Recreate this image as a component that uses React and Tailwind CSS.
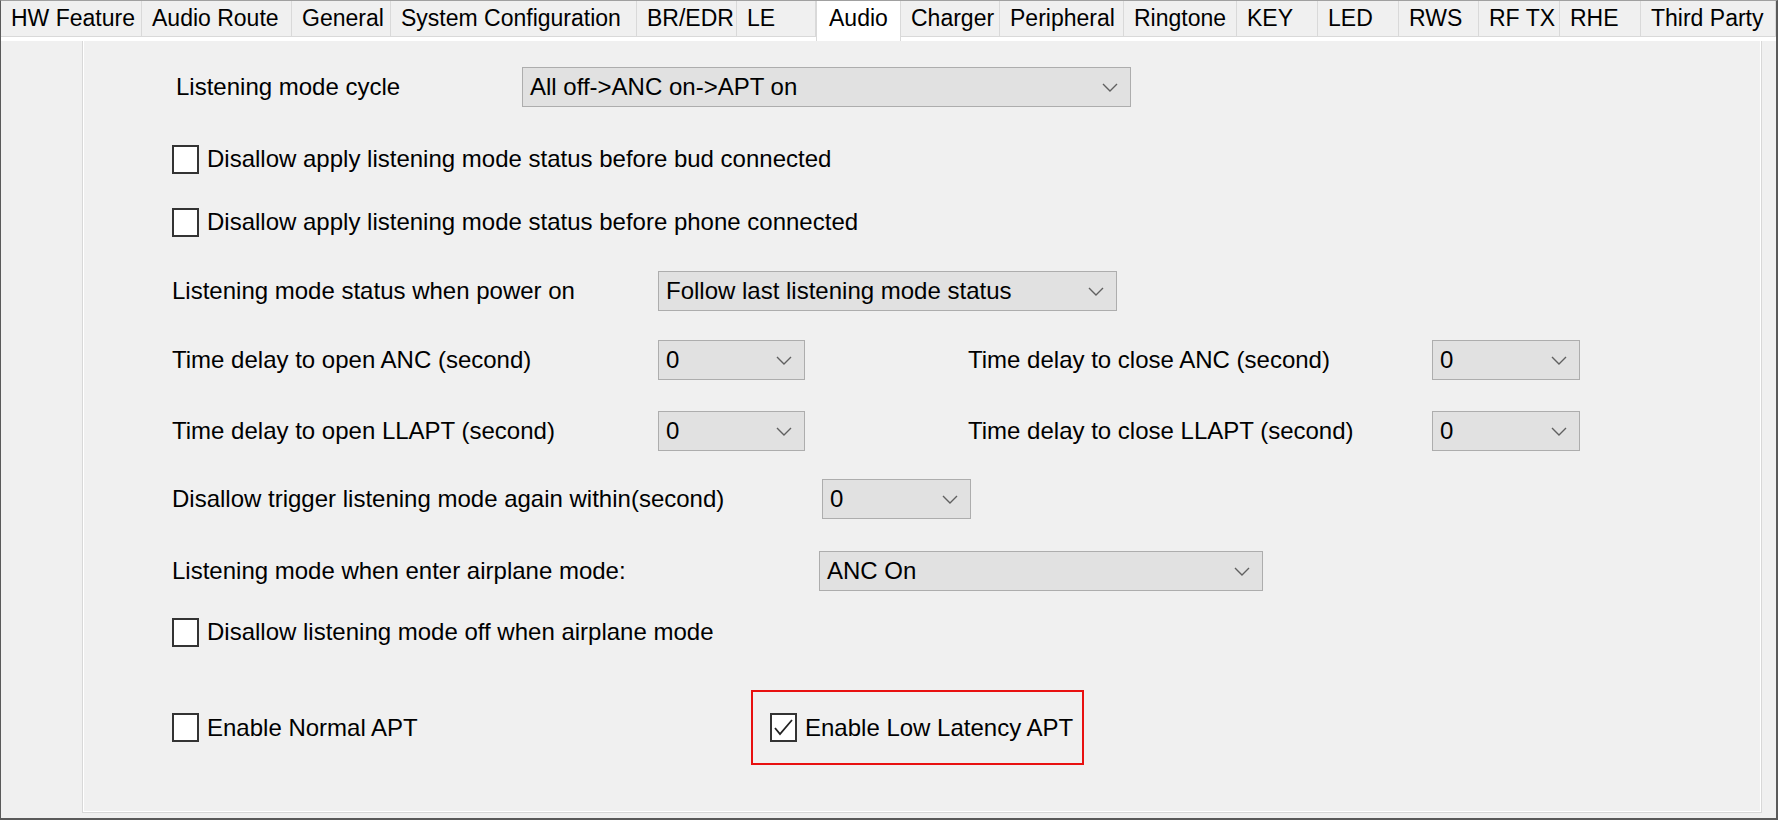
import React from "react";

const tabs = [
  { label: "HW Feature", w: "w-[141px]" },
  { label: "Audio Route", w: "w-[150px]" },
  { label: "General", w: "w-[99px]" },
  { label: "System Configuration", w: "w-[246px]" },
  { label: "BR/EDR", w: "w-[100px]" },
  { label: "LE", w: "w-[79px]" },
  { label: "Audio", w: "w-[85px]", active: true },
  { label: "Charger", w: "w-[99px]" },
  { label: "Peripheral", w: "w-[124px]" },
  { label: "Ringtone", w: "w-[113px]" },
  { label: "KEY", w: "w-[81px]" },
  { label: "LED", w: "w-[81px]" },
  { label: "RWS", w: "w-[80px]" },
  { label: "RF TX", w: "w-[81px]" },
  { label: "RHE", w: "w-[81px]" },
  { label: "Third Party", w: "w-[135px]" },
];

function Chevron() {
  return (
    <svg width="16" height="9" viewBox="0 0 16 9" className="shrink-0">
      <polyline points="1,1 8,8 15,1" fill="none" stroke="#606060" strokeWidth="1.4" />
    </svg>
  );
}

function Select({ value, w }) {
  return (
    <div
      className={`${w} h-[40px] shrink-0 flex items-center justify-between bg-[#e1e1e1] border border-[#adadad] pl-[7px] pr-[12px]`}
    >
      <span className="leading-none whitespace-nowrap">{value}</span>
      <Chevron />
    </div>
  );
}

function Checkbox({ checked }) {
  return (
    <div className="w-[27px] h-[29px] shrink-0 bg-white border-2 border-[#333333] flex items-center justify-center">
      {checked && (
        <svg width="21" height="21" viewBox="0 0 21 21">
          <polyline points="2,11 7,17 19,3" fill="none" stroke="#222222" strokeWidth="1.8" />
        </svg>
      )}
    </div>
  );
}

function CheckRow({ label, checked, className = "" }) {
  return (
    <div className={`flex items-center gap-[8px] ${className}`}>
      <Checkbox checked={checked} />
      <span className="leading-none whitespace-nowrap">{label}</span>
    </div>
  );
}

export default function App() {
  return (
    <div className="w-[1778px] h-[820px] flex flex-col bg-[#f0f0f0] border-l border-t border-r-2 border-b-2 border-l-[#5a5a5a] border-t-[#a0a0a0] border-r-[#5a5a5a] border-b-[#5a5a5a] text-black font-['Liberation_Sans',Arial,sans-serif] overflow-hidden">
      {/* Tab strip */}
      <div className="flex h-[40px] shrink-0">
        {tabs.map((t) =>
          t.active ? (
            <div
              key={t.label}
              className={`${t.w} h-[40px] bg-white border-l border-r border-[#d9d9d9] pl-[12px] pt-[5px] text-[23px] leading-[24px] whitespace-nowrap`}
            >
              {t.label}
            </div>
          ) : (
            <div key={t.label} className={`${t.w} flex flex-col`}>
              <div className="h-[35px] flex items-center pl-[10px] border-r border-[#d9d9d9] bg-[#f0f0f0] text-[23px] leading-none whitespace-nowrap">
                {t.label}
              </div>
              <div className="h-[1px] bg-[#d9d9d9]" />
              <div className="h-[4px] bg-white" />
            </div>
          )
        )}
      </div>

      {/* Panel */}
      <div className="flex-1 flex pl-[81px] pr-[14px] pb-[5px]">
        <div className="flex-1 border-l border-r border-b border-[#d8d8d8] shadow-[inset_1px_0_0_#ffffff,inset_-1px_0_0_#ffffff,inset_0_-1px_0_#ffffff] pl-[89px] pt-[26px] text-[24px] flex flex-col">
          {/* Row 1 */}
          <div className="h-[40px] flex items-center">
            <div className="w-[350px] pl-[4px] leading-none whitespace-nowrap">Listening mode cycle</div>
            <Select value="All off->ANC on->APT on" w="w-[609px]" />
          </div>

          <CheckRow className="h-[40px] mt-[32px]" label="Disallow apply listening mode status before bud connected" />
          <CheckRow className="h-[40px] mt-[23px]" label="Disallow apply listening mode status before phone connected" />

          <div className="h-[40px] mt-[29px] flex items-center">
            <div className="w-[486px] leading-none whitespace-nowrap">Listening mode status when power on</div>
            <Select value="Follow last listening mode status" w="w-[459px]" />
          </div>

          <div className="h-[40px] mt-[29px] flex items-center">
            <div className="w-[486px] leading-none whitespace-nowrap">Time delay to open ANC (second)</div>
            <Select value="0" w="w-[147px]" />
            <div className="w-[464px] ml-[163px] leading-none whitespace-nowrap">Time delay to close ANC (second)</div>
            <Select value="0" w="w-[148px]" />
          </div>

          <div className="h-[40px] mt-[31px] flex items-center">
            <div className="w-[486px] leading-none whitespace-nowrap">Time delay to open LLAPT (second)</div>
            <Select value="0" w="w-[147px]" />
            <div className="w-[464px] ml-[163px] leading-none whitespace-nowrap">Time delay to close LLAPT (second)</div>
            <Select value="0" w="w-[148px]" />
          </div>

          <div className="h-[40px] mt-[28px] flex items-center">
            <div className="w-[650px] leading-none whitespace-nowrap">Disallow trigger listening mode again within(second)</div>
            <Select value="0" w="w-[149px]" />
          </div>

          <div className="h-[40px] mt-[32px] flex items-center">
            <div className="w-[647px] leading-none whitespace-nowrap">Listening mode when enter airplane mode:</div>
            <Select value="ANC On" w="w-[444px]" />
          </div>

          <CheckRow className="h-[40px] mt-[21px]" label="Disallow listening mode off when airplane mode" />

          <div className="h-[75px] mt-[38px] flex items-center">
            <div className="w-[579px]">
              <CheckRow label="Enable Normal APT" />
            </div>
            <div className="w-[333px] h-[75px] border-2 border-[#e81010] pl-[17px] flex items-center">
              <CheckRow checked label="Enable Low Latency APT" />
            </div>
          </div>
        </div>
      </div>
    </div>
  );
}
